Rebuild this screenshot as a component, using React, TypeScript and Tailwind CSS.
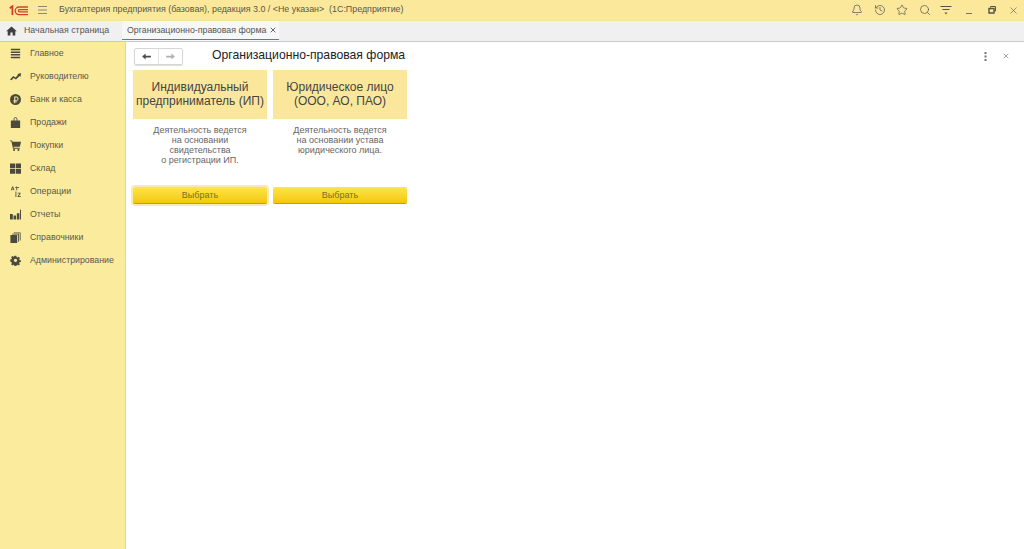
import { Bell, History, Search, Star, X } from "lucide-react";
import type { ReactNode } from "react";

const font = "font-['Liberation_Sans',Arial,sans-serif]";

const Icon = ({ children }: { children: ReactNode }) => (
  <svg width="11" height="11" viewBox="0 0 13 13" fill="#4b4a3c" className="shrink-0">
    {children}
  </svg>
);

const navItems: { label: string; icon: ReactNode }[] = [
  {
    label: "Главное",
    icon: (
      <Icon>
        <path d="M1 1h11v1.700H1zM1 4.100h11v1.700H1zM1 7.200h11v1.700H1zM1 10.300h11V12H1z" />
      </Icon>
    ),
  },
  {
    label: "Руководителю",
    icon: (
      <Icon>
        <path d="M0 10 3.800 5.800l2.800 1.900 3-3.200-1.200-.8L13 2.500l-.4 4.200-1.100-.9-4.500 4.300-2.700-1.900-2.400 2.600z" />
      </Icon>
    ),
  },
  {
    label: "Банк и касса",
    icon: (
      <Icon>
        <path
          fillRule="evenodd"
          d="M6.500 0a6.500 6.500 0 1 1 0 13 6.500 6.500 0 0 1 0-13zM5 3V7H4v1h1v.8H4v.9h1V11h1.300V9.700H8.500v-.9H6.300V8h1.300a2.500 2.500 0 0 0 0-5zm1.300 1.100h1.200a1.450 1.450 0 0 1 0 2.900H6.300z"
        />
      </Icon>
    ),
  },
  {
    label: "Продажи",
    icon: (
      <Icon>
        <path d="M1 4h3.200V2.600a2.300 2.300 0 0 1 4.600 0V4H12v9H1zM5.200 4h2.600V2.600a1.300 1.300 0 0 0-2.600 0z" fillRule="evenodd" />
      </Icon>
    ),
  },
  {
    label: "Покупки",
    icon: (
      <Icon>
        <path d="M0 .5h2.500l.5 1.700h10L11.700 8H4.200l.3 1.100h7v1.100H3.600L1.600 1.500H0z" />
        <circle cx="4.800" cy="11.700" r="1.200" />
        <circle cx="10" cy="11.700" r="1.200" />
      </Icon>
    ),
  },
  {
    label: "Склад",
    icon: (
      <Icon>
        <path d="M0 .5h6.100v5.700H0zM6.900.5H13v5.700H6.900zM0 7h6.100v5.700H0zM6.900 7H13v5.700H6.900z" />
      </Icon>
    ),
  },
  {
    label: "Операции",
    icon: (
      <Icon>
        <path d="M2.500 .5h1.200l1.500 4.500H4.100l-.3-1H2.300L2 5H1zM2.600 3.200h1L3.100 1.600zM6 1.500h1.500V.5h1v1h2.200v.9H8.500V5h-1V2.400H6zM6.500 6.500h1V13h-1zM9 8h3.500v.9L10.200 12H13v1H9v-.9L11.300 9H9z" />
      </Icon>
    ),
  },
  {
    label: "Отчеты",
    icon: (
      <Icon>
        <path d="M0 6h3.300v6.500H0zM4.200 7.800h3v4.700h-3zM8.100 5h3v7.500h-3zM11.800 1h1.200v11.500h-1.200z" />
      </Icon>
    ),
  },
  {
    label: "Справочники",
    icon: (
      <Icon>
        <path d="M.5 3.500h8V13h-8zM2.500 2h8v9.500h-1V3H2.500zM4.500.5h8V10h-1V1.500h-7z" />
      </Icon>
    ),
  },
  {
    label: "Администрирование",
    icon: (
      <svg width="11" height="11" viewBox="0 0 13.200 13.200" fill="#4b4a3c" className="shrink-0">
        <path
          fillRule="evenodd"
          d="M5.500 1h2.200l.3 1.600 1 .4 1.400-.9 1.500 1.500-.9 1.400.4 1 1.600.3v2.200l-1.600.3-.4 1 .9 1.400-1.500 1.500-1.400-.9-1 .4-.3 1.300H5.500l-.3-1.300-1-.4-1.400.9-1.500-1.500.9-1.400-.4-1L.2 7.500V5.300l1.600-.3.4-1-.9-1.400 1.500-1.500 1.400.9 1-.4zM6.600 4.400a2 2 0 1 0 0 4 2 2 0 0 0 0-4z"
        />
      </svg>
    ),
  },
];

const choices = [
  {
    title: ["Индивидуальный", "предприниматель (ИП)"],
    text: ["Деятельность ведется", "на основании", "свидетельства", "о регистрации ИП."],
    focused: true,
  },
  {
    title: ["Юридическое лицо", "(ООО, АО, ПАО)"],
    text: ["Деятельность ведется", "на основании устава", "юридического лица."],
    focused: false,
  },
];

function TopBar() {
  return (
    <header className="flex h-[21px] shrink-0 items-center border-b border-[#f5e3a0] bg-[#fbe89b]">
      <svg width="20" height="11" viewBox="0 0 20 11" className="ml-[9px] shrink-0" fill="none" stroke="#d6402b">
        <path d="M.8 3.200 3.400 1.200V10" strokeWidth="1.800" />
        <path d="M19 2H10a3.800 3.800 0 0 0 0 7.600h9" strokeWidth="1.300" />
        <path d="M19 4.700h-8.500a1.100 1.100 0 0 0 0 2.200H19" strokeWidth="1.200" />
      </svg>
      <svg width="11" height="10" viewBox="0 0 11 10" className="ml-[8px] shrink-0" stroke="#8d8a72" strokeWidth="1.200">
        <path d="M1 1.500h9M1 5h9M1 8.500h9" />
      </svg>
      <span className="ml-[11px] whitespace-pre text-[8.900px] text-[#5a594a]">
        Бухгалтерия предприятия (базовая), редакция 3.0 / &lt;Не указан&gt;  (1С:Предприятие)
      </span>
      <div className="ml-auto flex items-center text-[#55534a]">
        <Bell size={12} strokeWidth={1.400} className="mr-[11px]" />
        <History size={12} strokeWidth={1.400} className="mr-[10px]" />
        <Star size={12} strokeWidth={1.400} className="mr-[11px]" />
        <Search size={12} strokeWidth={1.400} className="mr-[9px]" />
        <svg width="12" height="12" viewBox="0 0 12 12" className="mr-[13px]" stroke="#55534a" fill="#55534a">
          <path d="M.5 2.500h11M2.500 5.500h7" strokeWidth="1" />
          <path d="M4.500 8.500h3l-1.500 2z" stroke="none" />
        </svg>
        <svg width="10" height="10" viewBox="0 0 10 10" className="mr-[12px]" stroke="#77745f">
          <path d="M1 8.500h6" strokeWidth="1" />
        </svg>
        <svg width="10" height="10" viewBox="0 0 10 10" className="mr-[11px]" fill="none" stroke="#55534a">
          <path d="M3.500 2.500V1.500h5v4.500H7" strokeWidth="1" />
          <path d="M2 3.500h5v4.500H2z" strokeWidth="1.400" />
        </svg>
        <X size={11} strokeWidth={1.300} className="mr-[5px]" />
      </div>
    </header>
  );
}

function TabBar() {
  return (
    <div className="flex h-[21px] shrink-0 items-stretch border-b border-[#c9c9c9] bg-[#f0f0f0]">
      <div className="flex w-[122px] items-center text-[8.800px] text-[#555]">
        <svg width="11" height="10" viewBox="0 0 11 10" fill="#3f3f3f" className="ml-[6px] shrink-0">
          <path d="M5.500 .5 10.800 5.300H9.300V9.500H6.600V6.500H4.400V9.500H1.700V5.300H.2z" />
        </svg>
        <span className="ml-[7px] whitespace-nowrap">Начальная страница</span>
      </div>
      <div className="relative flex w-[157px] items-center bg-[#f7f7f7] pb-[1px] text-[8.800px] text-[#555]">
        <span className="ml-[5px] whitespace-nowrap">Организационно-правовая форма</span>
        <X size={8} strokeWidth={2.400} className="absolute right-[2px] top-[5px] text-[#444]" />
        <span className="absolute bottom-[1px] left-0 right-0 h-[1px] bg-[#2b9a80]" />
      </div>
    </div>
  );
}

function Sidebar() {
  return (
    <nav className="flex w-[126px] shrink-0 flex-col border-r border-[#e2d795] bg-[#fbec9d]">
      {navItems.map((item) => (
        <div key={item.label} className="flex h-[23px] items-center pl-[10px] text-[8.800px] text-[#5a594a]">
          {item.icon}
          <span className="ml-[9px] whitespace-nowrap">{item.label}</span>
        </div>
      ))}
    </nav>
  );
}

function ChoiceCard({ title, text, focused }: { title: string[]; text: string[]; focused: boolean }) {
  return (
    <div className="flex w-[134px] flex-col">
      <div className="flex h-[49px] flex-col items-center justify-center bg-[#fbe79c] pb-[2px] text-[12px] leading-[14px] text-[#444]">
        {title.map((line) => (
          <span key={line} className="whitespace-nowrap">{line}</span>
        ))}
      </div>
      <div className="mt-[6px] flex h-[57px] flex-col items-center text-[9px] leading-[10px] text-[#666]">
        {text.map((line) => (
          <span key={line} className="whitespace-nowrap">{line}</span>
        ))}
      </div>
      <div
        className={`mt-[5px] flex h-[17px] items-center justify-center rounded-[2px] border-b border-[#c79f00] bg-gradient-to-b from-[#ffe545] to-[#f4c800] pt-[1px] text-[9px] text-[#77702f] ${
          focused ? "shadow-[0_0_0_2px_#f5ebb5]" : ""
        }`}
      >
        Выбрать
      </div>
    </div>
  );
}

function Content() {
  return (
    <main className="min-w-0 flex-1 bg-white pl-[7px] pt-[5px]">
      <div className="flex h-[18px] items-center">
        <div className="ml-[1px] flex h-[17px] w-[49px] rounded-[2px] border border-[#d6d6d6] shadow-[0_1px_1px_#ddd]">
          <div className="flex w-[24px] items-center justify-center border-r border-[#e4e4e4]">
            <svg width="9" height="7" viewBox="0 0 10 8" fill="#4a4a4a">
              <path d="M0 4 4 .5V3h6v2H4v2.500z" />
            </svg>
          </div>
          <div className="flex flex-1 items-center justify-center">
            <svg width="9" height="7" viewBox="0 0 10 8" fill="#b0b0b0">
              <path d="M10 4 6 .5V3H0v2h6v2.500z" />
            </svg>
          </div>
        </div>
        <h1 className="ml-[29px] mb-[2px] whitespace-nowrap text-[12.200px] text-[#222]">Организационно-правовая форма</h1>
        <div className="ml-auto mr-[14px] flex items-center">
          <svg width="3" height="9" viewBox="0 0 3 9" fill="#777" className="mr-[15px]">
            <path d="M.5 0h2v2h-2zM.5 3.500h2v2h-2zM.5 7h2v2h-2z" />
          </svg>
          <X size={8} strokeWidth={1.800} className="text-[#666]" />
        </div>
      </div>
      <div className="mt-[5px] flex gap-[6px]">
        {choices.map((choice) => (
          <ChoiceCard key={choice.title[0]} {...choice} />
        ))}
      </div>
    </main>
  );
}

export default function App() {
  return (
    <div className={`flex h-[549px] w-[1024px] flex-col overflow-hidden bg-white ${font}`}>
      <TopBar />
      <TabBar />
      <div className="flex min-h-0 flex-1">
        <Sidebar />
        <Content />
      </div>
    </div>
  );
}
